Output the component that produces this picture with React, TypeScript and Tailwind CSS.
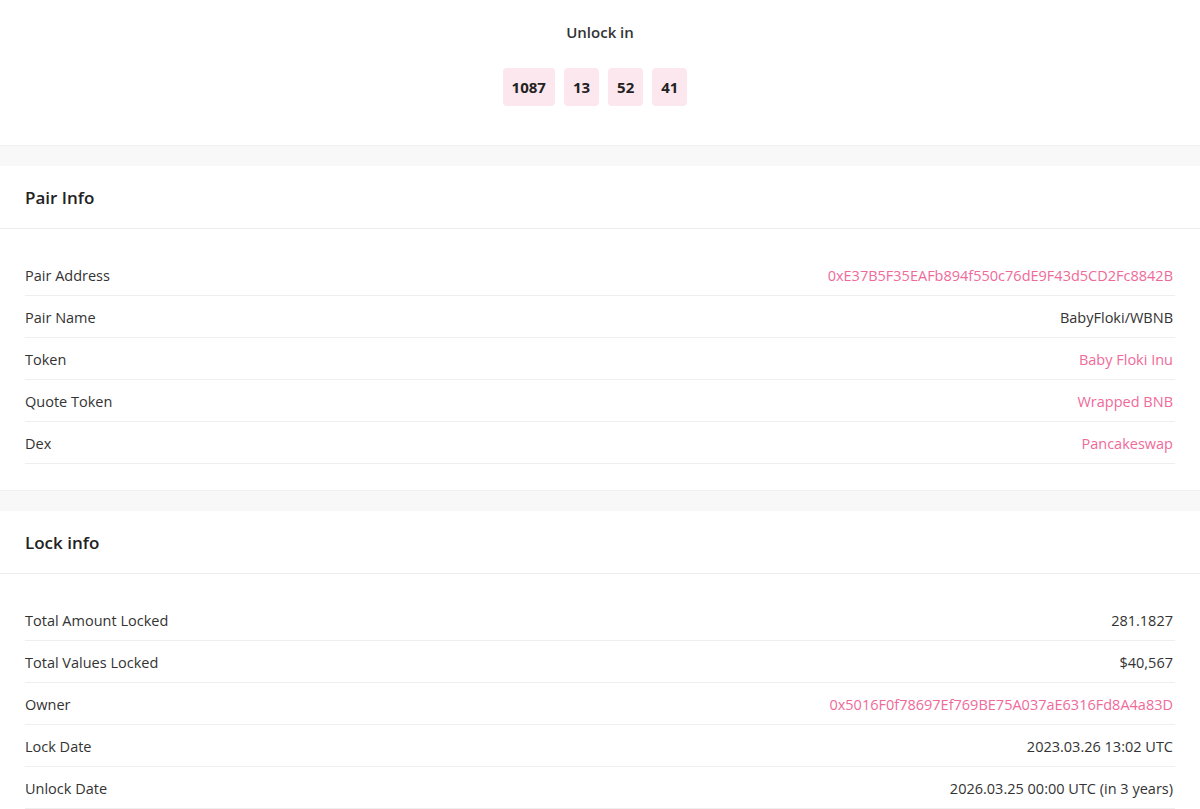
import React from 'react';

interface Row {
    label: string;
    value: string;
    link?: boolean;
}

const pairRows: Row[] = [
    { label: 'Pair Address', value: '0xE37B5F35EAFb894f550c76dE9F43d5CD2Fc8842B', link: true },
    { label: 'Pair Name', value: 'BabyFloki/WBNB' },
    { label: 'Token', value: 'Baby Floki Inu', link: true },
    { label: 'Quote Token', value: 'Wrapped BNB', link: true },
    { label: 'Dex', value: 'Pancakeswap', link: true },
];

const lockRows: Row[] = [
    { label: 'Total Amount Locked', value: '281.1827' },
    { label: 'Total Values Locked', value: '$40,567' },
    { label: 'Owner', value: '0x5016F0f78697Ef769BE75A037aE6316Fd8A4a83D', link: true },
    { label: 'Lock Date', value: '2023.03.26 13:02 UTC' },
    { label: 'Unlock Date', value: '2026.03.25 00:00 UTC (in 3 years)' },
];

const countdown = ['1087', '13', '52', '41'];

const Card = ({ title, rows }: { title: string; rows: Row[] }) => (
    <section className="bg-white">
        <div className="h-[63px] pt-[2px] flex items-center px-[25px] border-b border-[#ededed]">
            <h2 className="text-[17px] font-semibold text-[#222]">{title}</h2>
        </div>
        <div className="pl-[25px] pr-[25px] pt-[25px] pb-[26px]">
            {rows.map((row) => (
                <div key={row.label} className="h-[42px] pt-[3px] flex items-center justify-between border-b border-[#efefef]">
                    <span className="text-[#333]">{row.label}</span>
                    <span className={row.link ? 'text-[#ef6a9a] pr-[2px]' : 'text-[#333] pr-[2px]'}>{row.value}</span>
                </div>
            ))}
        </div>
    </section>
);

const Band = () => <div className="h-[21px] bg-[#f8f8f8] border-t border-[#f0f0f0]" />;

export default function App() {
    return (
        <div className="min-h-screen bg-white text-[14.5px]" style={{ fontFamily: '"Open Sans", "Noto Sans", sans-serif' }}>
            <div className="h-[145px] flex flex-col items-center pt-[21px]">
                <div className="text-[15px] font-semibold text-[#333] leading-[22px]">Unlock in</div>
                <div className="flex gap-[9px] mt-[25px] mr-[10px]">
                    {countdown.map((n, i) => (
                        <div key={i} className="h-[38px] px-[9px] min-w-[35px] flex items-center justify-center rounded-[4px] bg-[#fde7ee] font-bold text-[15px] text-[#222]">
                            {n}
                        </div>
                    ))}
                </div>
            </div>
            <Band />
            <Card title="Pair Info" rows={pairRows} />
            <Band />
            <Card title="Lock info" rows={lockRows} />
        </div>
    );
}
